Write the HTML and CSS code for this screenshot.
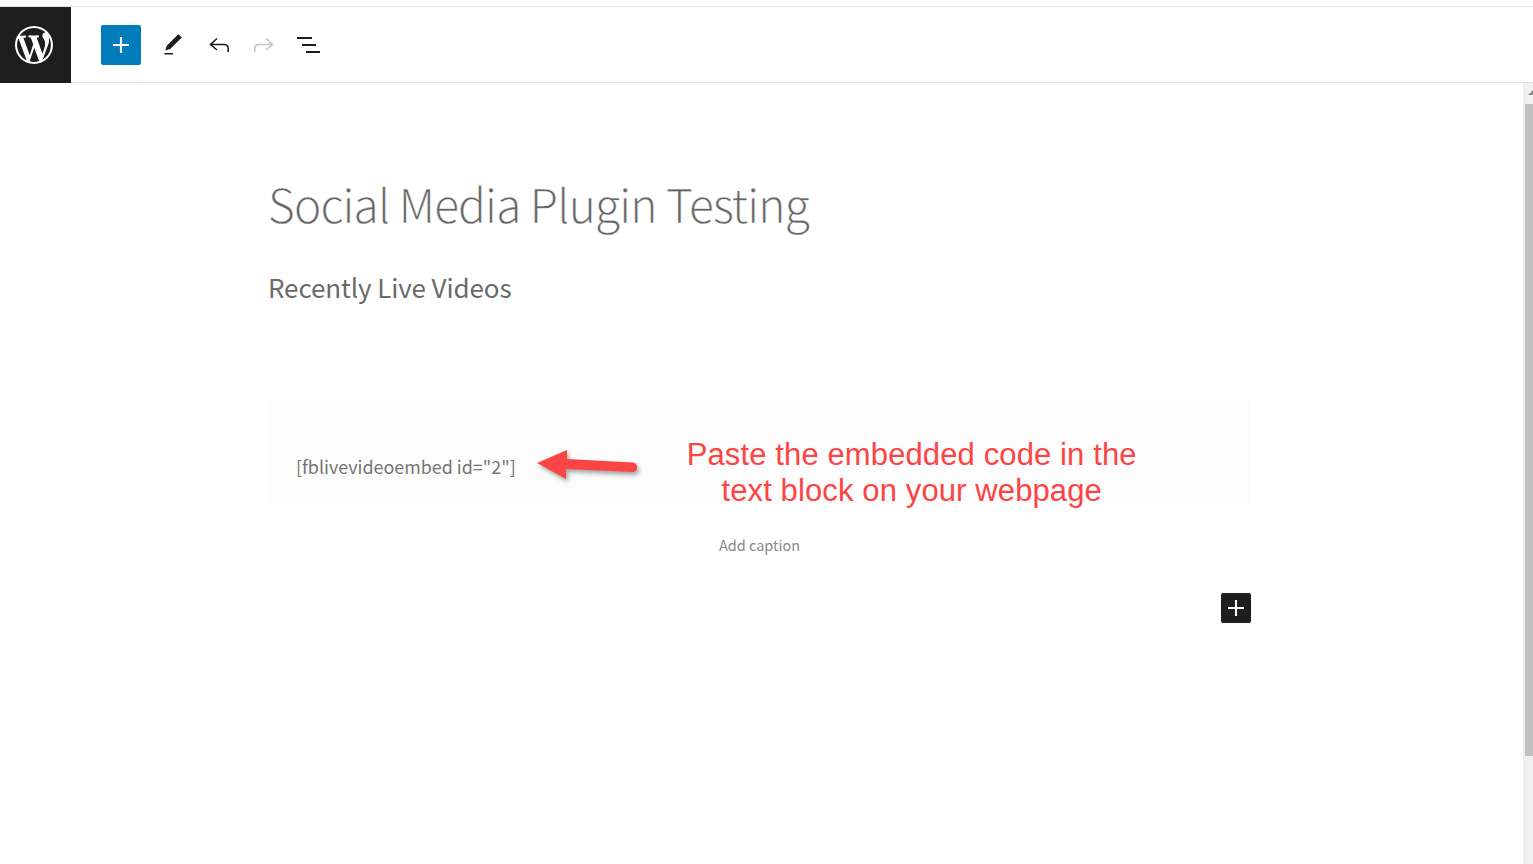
FILE: index.html
```html
<!DOCTYPE html>
<html lang="en">
<head>
    <meta charset="UTF-8">
    <meta name="viewport" content="width=device-width, initial-scale=1.0">
    <title>Social Media Plugin Testing</title>
    <link rel="stylesheet" href="styles.css">
</head>
<body>
    <header class="toolbar">
        <a class="logo" href="#">
            <svg width="38" height="38" viewBox="0 0 20 20"><path fill="#fff" d="M20 10c0-5.51-4.49-10-10-10C4.48 0 0 4.49 0 10c0 5.52 4.48 10 10 10 5.51 0 10-4.48 10-10zM7.78 15.37L4.37 6.22c.55-.02 1.17-.08 1.17-.08.5-.06.44-1.13-.06-1.11 0 0-1.45.11-2.37.11-.18 0-.37 0-.58-.01C4.12 2.69 6.87 1.11 10 1.11c2.33 0 4.45.87 6.05 2.34-.68-.11-1.65.39-1.65 1.58 0 .74.45 1.36.9 2.1.35.61.55 1.36.55 2.46 0 1.49-1.4 5-1.4 5l-3.03-8.37c.54-.02.82-.17.82-.17.5-.05.44-1.25-.06-1.22 0 0-1.44.12-2.38.12-.87 0-2.33-.12-2.33-.12-.5-.03-.56 1.2-.06 1.22l.92.08 1.26 3.41zM17.41 10c.24-.64.74-1.87.43-4.25.7 1.29 1.05 2.71 1.05 4.25 0 3.29-1.73 6.24-4.4 7.78.97-2.59 1.94-5.2 2.92-7.78zM6.1 18.09C3.12 16.65 1.11 13.53 1.11 10c0-1.3.23-2.48.72-3.59C3.25 10.3 4.67 14.2 6.1 18.09zm4.03-6.63l2.58 6.98c-.86.29-1.76.45-2.71.45-.79 0-1.57-.11-2.29-.33.81-2.38 1.62-4.74 2.42-7.1z"/></svg>
        </a>
        <div class="tools">
            <button class="tool tool-add"><svg width="32" height="32" viewBox="0 0 24 24"><path fill="#fff" d="M18 11.2h-5.2V6h-1.6v5.2H6v1.6h5.2V18h1.6v-5.2H18z"/></svg></button>
            <button class="tool tool-pencil"><svg width="26" height="26" viewBox="0 0 24 24"><path fill="#1e1e1e" d="M20.1 5.1L16.9 2 6.2 12.7l-1.3 4.4 4.5-1.3L20.1 5.1zM4 20.8h8v-1.5H4v1.5z"/></svg></button>
            <button class="tool"><svg width="24" height="24" viewBox="0 0 24 24"><path class="line" stroke="#1e1e1e" d="M10 5.500 L3.500 11.500 L10 17 M3.500 11.500 H17 Q21.200 11.500 21.200 15.500 V19"/></svg></button>
            <button class="tool"><svg width="24" height="24" viewBox="0 0 24 24"><path class="line" stroke="#c4c4c4" d="M14 5.500 L20.500 11.500 L14 17 M20.500 11.500 H7 Q2.800 11.500 2.800 15.500 V19"/></svg></button>
            <button class="tool"><svg width="24" height="24" viewBox="0 0 24 24"><path class="line line-list" stroke="#1e1e1e" d="M0 5 H15 M5 12 H19 M9 19 H23"/></svg></button>
        </div>
    </header>
    <div class="workspace">
        <main class="editor">
            <h1 class="post-title">Social Media Plugin Testing</h1>
            <p class="heading">Recently Live Videos</p>
            <div class="embed-block">
                <span class="shortcode">[fblivevideoembed id="2"]</span>
                <svg class="arrow" width="106" height="44" viewBox="0 0 106 44"><path fill="#fb4444" d="M4 19 L34 6 L34 15 L100 18.500 A4.800 4.800 0 0 1 100 28 L33 25 L33 35 Z"/></svg>
                <p class="note">Paste the embedded code in the<br>text block on your webpage</p>
            </div>
            <p class="caption">Add caption</p>
            <div class="inserter-row">
                <button class="inserter"><svg width="32" height="32" viewBox="0 0 24 24"><path fill="#fff" d="M18 11.2h-5.200V6h-1.600v5.200H6v1.600h5.200V18h1.600v-5.200H18z"/></svg></button>
            </div>
        </main>
        <div class="scrollbar">
            <div class="scroll-arrow"></div>
            <div class="scroll-thumb"></div>
        </div>
    </div>
</body>
</html>
```

FILE: styles.css
```css
* {
    box-sizing: border-box;
}
html, body {
    height: 100%;
}
body {
    margin: 0;
    padding-top: 6px;
    display: flex;
    flex-direction: column;
    overflow: hidden;
    background-color: #fff;
    font-family: "Noto Sans CJK SC", "Noto Sans", sans-serif;
    color: #6b6b6b;
}
.toolbar {
    display: flex;
    height: 77px;
    border-top: 1px solid #e0e0e0;
    border-bottom: 1px solid #e0e0e0;
}
.logo {
    display: flex;
    align-items: center;
    justify-content: center;
    width: 71px;
    margin-bottom: -1px;
    padding-right: 4px;
    background-color: #1e1e1e;
}
.tools {
    display: flex;
    align-items: center;
    gap: 5px;
    padding-left: 30px;
}
button {
    display: flex;
    align-items: center;
    justify-content: center;
    padding: 0;
    border: none;
    background: none;
}
.tool {
    width: 40px;
    height: 40px;
    border-radius: 2px;
}
.tool svg {
    flex-shrink: 0;
}
.tool-add {
    margin-right: 7px;
    background-color: #007cba;
}
.tool-pencil {
    margin-right: 1px;
}
.line {
    fill: none;
    stroke-width: 1.6;
}
.line-list {
    stroke-width: 1.9;
}
.workspace {
    flex: 1;
    display: flex;
    min-height: 0;
}
.editor {
    flex: 1;
    padding: 0 272px 0 268px;
}
.post-title {
    margin: 85px 0 0;
    font-size: 46px;
    font-weight: 300;
    line-height: 70px;
    letter-spacing: -0.8px;
    white-space: nowrap;
    color: #666;
    -webkit-text-stroke: 0.3px #fff;
}
.heading {
    margin: 29px 0 0;
    font-size: 26px;
    line-height: 40px;
    letter-spacing: -0.1px;
}
.embed-block {
    display: flex;
    align-items: flex-start;
    height: 104px;
    margin-top: 93px;
    padding-left: 28px;
    background-color: #fcfcfc;
}
.shortcode {
    margin-top: 52px;
    font-size: 17.9px;
    line-height: 28px;
    color: #757575;
}
.arrow {
    flex-shrink: 0;
    margin: 44px 0 0 17px;
    filter: drop-shadow(2px 3px 2px rgba(0, 0, 0, 0.35));
}
.note {
    flex-shrink: 0;
    width: 450px;
    margin: 37px 0 0 48px;
    font-family: "Liberation Sans", Arial, sans-serif;
    font-size: 31px;
    line-height: 36px;
    letter-spacing: 0.12px;
    text-align: center;
    color: #fb4444;
    white-space: nowrap;
}
.caption {
    margin: 29px 0 0;
    font-size: 14.5px;
    line-height: 24px;
    text-align: center;
    color: #8a8a8a;
}
.inserter-row {
    display: flex;
    justify-content: flex-end;
    margin-top: 36px;
}
.inserter {
    width: 30px;
    height: 30px;
    border-radius: 2px;
    background-color: #1e1e1e;
    overflow: hidden;
}
.inserter svg {
    flex-shrink: 0;
}
.scrollbar {
    position: relative;
    width: 10px;
    background-color: #f0f0f0;
}
.scroll-arrow {
    height: 21px;
}
.scroll-arrow::after {
    content: "";
    position: absolute;
    top: 7px;
    right: 0;
    border-left: 5px solid transparent;
    border-bottom: 5px solid #8c8c8c;
}
.scroll-thumb {
    height: 652px;
    margin-left: 2px;
    background-color: #c1c1c1;
}
```
